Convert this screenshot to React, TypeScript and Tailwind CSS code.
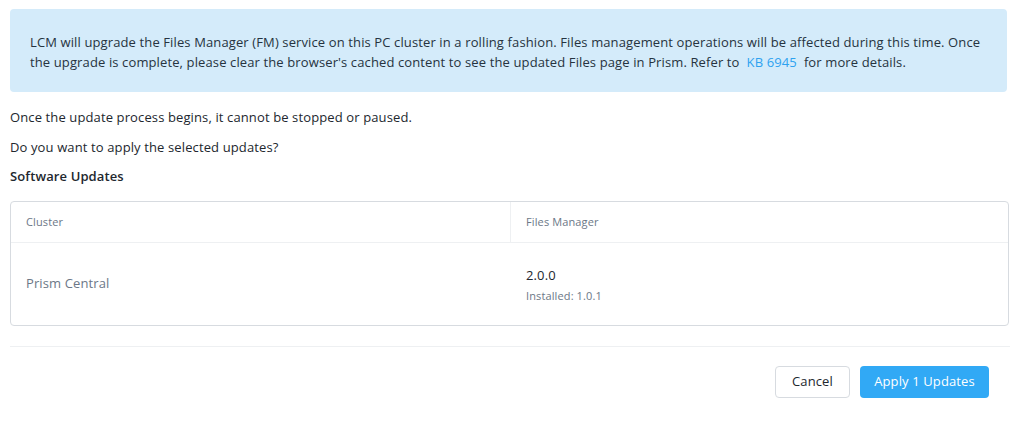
import React from 'react';

const App: React.FC = () => {
  return (
    <div className="w-[1017px] h-[426px] bg-white font-['Open_Sans','Liberation_Sans',sans-serif] text-[13px] tracking-[0.12px] text-[#22272e]">
      <div className="px-[10px] pt-[9px]">
        {/* Info banner */}
        <div className="bg-[#d4ebfa] rounded-[4px] pl-[20px] pr-[12px] pt-[23px] pb-[20px] leading-[20px] text-[#263340]">
          LCM will upgrade the Files Manager (FM) service on this PC cluster in a rolling fashion. Files management operations will be affected during this time. Once the upgrade is complete, please clear the browser's cached content to see the updated Files page in Prism. Refer to
          <a className="inline-block text-[#2ea2f0] mx-[7px]">KB 6945</a>for more details.
        </div>

        <p className="mt-[16px] leading-[18px]">Once the update process begins, it cannot be stopped or paused.</p>
        <p className="mt-[12px] leading-[18px]">Do you want to apply the selected updates?</p>
        <p className="mt-[11px] leading-[18px] font-semibold">Software Updates</p>

        {/* Table */}
        <div className="mt-[16px] w-[999px] border border-[#d7dbe0] rounded-[4px]">
          <div className="flex h-[41px] border-b border-[#eef0f2]">
            <div className="w-[500px] border-r border-[#eef0f2] flex items-center pl-[15px] text-[11px] text-[#6c7887]">Cluster</div>
            <div className="flex-1 flex items-center pl-[15px] text-[11px] text-[#6c7887]">Files Manager</div>
          </div>
          <div className="flex h-[82px]">
            <div className="w-[500px] flex items-center pl-[15px] text-[#6c7887]">Prism Central</div>
            <div className="flex-1 flex flex-col justify-center pl-[15px]">
              <span className="leading-[18px] text-[#22272e]">2.0.0</span>
              <span className="mt-[5px] text-[11px] leading-[14px] text-[#6c7887]">Installed: 1.0.1</span>
            </div>
          </div>
        </div>

        <div className="mt-[20px] h-px w-[1000px] bg-[#eef0f2]" />

        {/* Footer */}
        <div className="flex justify-end gap-[10px] pr-[18px] mt-[19px]">
          <button className="h-[32px] w-[75px] rounded-[4px] border border-[#d7dbe0] bg-white text-[#22272e] text-[13px]">Cancel</button>
          <button className="h-[32px] w-[129px] rounded-[4px] bg-[#31a9f5] text-white text-[13px]">Apply 1 Updates</button>
        </div>
      </div>
    </div>
  );
};

export default App;
